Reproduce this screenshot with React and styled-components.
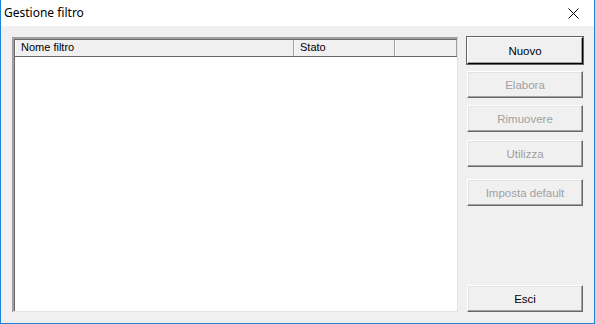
import React from 'react'
import styled, { createGlobalStyle } from 'styled-components'

const GlobalStyle = createGlobalStyle`
  html, body {
    margin: 0;
    padding: 0;
    background: #ffffff;
  }
  * {
    box-sizing: border-box;
  }
`

const Window = styled.div`
  width: 595px;
  height: 324px;
  display: flex;
  flex-direction: column;
  border: 1px solid #1c83d6;
  border-top: none;
  font-family: "Liberation Sans", Arial, sans-serif;
  font-size: 11px;
  color: #000;
  background: #f0f0f0;
`

const TitleBar = styled.div`
  height: 26px;
  background: #ffffff;
  display: flex;
  align-items: center;
  justify-content: space-between;
  padding: 0 10px 0 3px;
`

const Title = styled.span`
  font-family: "Noto Sans", "Liberation Sans", sans-serif;
  font-size: 12px;
  padding-bottom: 2px;
`

const CloseButton = styled.div`
  width: 26px;
  height: 26px;
  display: flex;
  align-items: center;
  justify-content: center;
  margin-right: -2px;
`

const Body = styled.div`
  flex: 1;
  display: flex;
  gap: 9px;
  padding: 11px;
`

const ListBox = styled.div`
  width: 446px;
  background: #ffffff;
  border-top: 2px solid #a0a0a0;
  border-left: 2px solid #a0a0a0;
  border-right: 1px solid #e3e3e3;
  border-bottom: 1px solid #e3e3e3;
  box-shadow: inset 1px 1px 0 #696969;
  display: flex;
  flex-direction: column;
`

const Header = styled.div`
  display: flex;
  height: 17px;
  margin-top: 1px;
  margin-left: 1px;
  background: #f0f0f0;
  border-bottom: 1px solid #696969;
`

const HeaderCell = styled.div`
  width: ${p => p.$width}px;
  padding-left: 5px;
  line-height: 15px;
  border-left: 1px solid #ffffff;
  border-right: 1px solid #a0a0a0;
`

const Buttons = styled.div`
  width: 117px;
  display: flex;
  flex-direction: column;
`

const Button = styled.div`
  height: 27px;
  margin-top: ${p => p.$top || 0}px;
  display: flex;
  align-items: center;
  justify-content: center;
  background: #f0f0f0;
  color: ${p => (p.$disabled ? '#a0a0a0' : '#000')};
  border-top: 1px solid #ffffff;
  border-left: 1px solid #ffffff;
  border-right: 1px solid ${p => (p.$default ? '#000' : '#696969')};
  border-bottom: 1px solid ${p => (p.$default ? '#000' : '#696969')};
  box-shadow: ${p =>
    p.$default
      ? '0 0 0 1px #646464, inset -1px -1px 0 #a0a0a0'
      : 'inset -1px -1px 0 #a0a0a0, inset 1px 1px 0 #e3e3e3'};
  font-size: 11.5px;
`

const Spacer = styled.div`
  flex: 1;
`

export default function App() {
  return (
    <>
      <GlobalStyle />
      <Window>
        <TitleBar>
          <Title>Gestione filtro</Title>
          <CloseButton>
            <svg width="11" height="11" viewBox="0 0 11 11">
              <path d="M0.5 0.5 L10.5 10.5 M10.5 0.5 L0.5 10.5" stroke="#000" strokeWidth="1" />
            </svg>
          </CloseButton>
        </TitleBar>
        <Body>
          <ListBox>
            <Header>
              <HeaderCell $width={279}>Nome filtro</HeaderCell>
              <HeaderCell $width={101}>Stato</HeaderCell>
              <HeaderCell $width={62} />
            </Header>
          </ListBox>
          <Buttons>
            <Button $default>Nuovo</Button>
            <Button $disabled $top={7}>Elabora</Button>
            <Button $disabled $top={7}>Rimuovere</Button>
            <Button $disabled $top={8}>Utilizza</Button>
            <Button $disabled $top={12}>Imposta default</Button>
            <Spacer />
            <Button>Esci</Button>
          </Buttons>
        </Body>
      </Window>
    </>
  )
}
